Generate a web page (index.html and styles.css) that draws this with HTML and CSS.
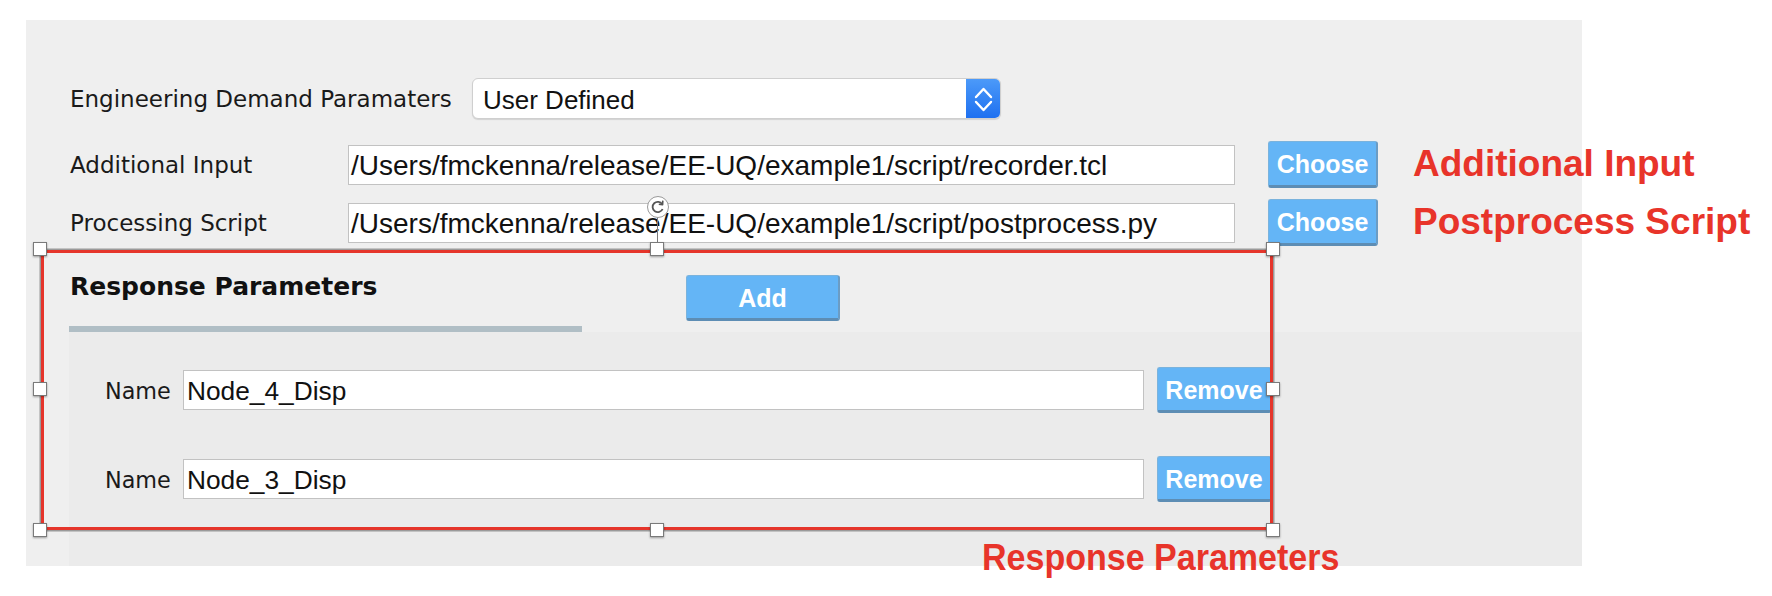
FILE: index.html
```html
<!DOCTYPE html>
<html>
<head>
<meta charset="utf-8">
<link rel="stylesheet" href="styles.css">
</head>
<body>
<div class="page">
  <div class="panel">
    <div class="form">
      <div class="row row-edp">
        <span class="lbl lbl-edp">Engineering Demand Paramaters</span>
        <div class="combo">
          <span class="combo-text">User Defined</span>
          <span class="combo-arrow">
            <svg width="34" height="41" viewBox="0 0 34 41"><polyline points="10,19 17.5,11 25,19" fill="none" stroke="#fff" stroke-width="2.4" stroke-linecap="round" stroke-linejoin="round"/><polyline points="10,24 17.5,32 25,24" fill="none" stroke="#fff" stroke-width="2.4" stroke-linecap="round" stroke-linejoin="round"/></svg>
          </span>
        </div>
      </div>
      <div class="row row-file row-first">
        <span class="lbl lbl-file">Additional Input</span>
        <div class="field field-path">/Users/fmckenna/release/EE-UQ/example1/script/recorder.tcl</div>
        <button class="btn btn-choose">Choose</button>
      </div>
      <div class="row row-file row-second">
        <span class="lbl lbl-file">Processing Script</span>
        <div class="field field-path">/Users/fmckenna/release/EE-UQ/example1/script/postprocess.py</div>
        <button class="btn btn-choose">Choose</button>
      </div>
    </div>
    <div class="section">
      <div class="section-head">
        <div class="tab"><span class="tab-title">Response Parameters</span></div>
        <button class="btn btn-add">Add</button>
      </div>
      <div class="section-body">
        <div class="param-row">
          <span class="param-lbl">Name</span>
          <div class="field field-param">Node_4_Disp</div>
          <button class="btn btn-remove">Remove</button>
        </div>
        <div class="param-row param-row-2">
          <span class="param-lbl">Name</span>
          <div class="field field-param">Node_3_Disp</div>
          <button class="btn btn-remove">Remove</button>
        </div>
      </div>
    </div>
  </div>

  <div class="sel-frame"></div>
  <div class="rot-line"></div>
  <div class="rot-handle">
    <svg width="22" height="22" viewBox="0 0 22 22"><path d="M15.2 8.2 A5.2 5.2 0 1 0 15.6 13" fill="none" stroke="#555" stroke-width="1.8"/><polyline points="15.8,4.6 15.6,8.6 11.8,8.2" fill="none" stroke="#555" stroke-width="1.6" stroke-linejoin="round"/></svg>
  </div>
  <div class="handle h-tl"></div>
  <div class="handle h-tm"></div>
  <div class="handle h-tr"></div>
  <div class="handle h-ml"></div>
  <div class="handle h-mr"></div>
  <div class="handle h-bl"></div>
  <div class="handle h-bm"></div>
  <div class="handle h-br"></div>

  <div class="note note-add">Additional Input</div>
  <div class="note note-post">Postprocess Script</div>
  <div class="note note-resp">Response Parameters</div>
</div>
</body>
</html>
```

FILE: styles.css
```css
html, body {
  margin: 0;
  padding: 0;
  background: #ffffff;
}

.page {
  position: relative;
  width: 1772px;
  height: 596px;
  overflow: hidden;
  font-family: "DejaVu Sans", "Liberation Sans", sans-serif;
  color: #161616;
}

.panel {
  position: absolute;
  left: 26px;
  top: 20px;
  width: 1556px;
  height: 546px;
  background: #efefef;
  display: flex;
  flex-direction: column;
}

.form {
  padding: 58px 0 0 44px;
  display: flex;
  flex-direction: column;
}

.row {
  display: flex;
  align-items: center;
}

.row-edp { height: 41px; }
.row-file { height: 47px; }
.row-first { margin-top: 22px; }
.row-second { margin-top: 11px; }

.lbl {
  font-size: 23px;
  white-space: nowrap;
  color: #1a1a1a;
}
.lbl-edp { width: 402px; flex: none; }
.lbl-file { width: 278px; flex: none; padding-top: 1px; }

.combo {
  width: 529px;
  height: 41px;
  box-sizing: border-box;
  background: #fff;
  border: 1px solid #cfcfcf;
  border-radius: 6px;
  box-shadow: 0 1px 1px rgba(0, 0, 0, 0.12);
  display: flex;
  align-items: center;
  overflow: hidden;
}
.combo-text {
  flex: 1;
  padding: 3px 0 0 10px;
  font-family: "Liberation Sans", Arial, sans-serif;
  font-size: 26px;
  color: #111;
}
.combo-arrow {
  width: 34px;
  height: 41px;
  flex: none;
  background: linear-gradient(#4d9bf9, #1d6ff0);
  display: flex;
}

.field {
  height: 40px;
  box-sizing: border-box;
  background: #fff;
  border: 1px solid #c2c2c2;
  display: flex;
  align-items: center;
  font-family: "Liberation Sans", Arial, sans-serif;
  color: #111;
  white-space: nowrap;
  overflow: hidden;
}
.field-path {
  width: 887px;
  flex: none;
  padding: 2px 0 0 2px;
  font-size: 28px;
}

.btn {
  box-sizing: border-box;
  margin: 0;
  padding: 2px 0 0 0;
  background: #64b5f6;
  color: #ffffff;
  font-family: "Liberation Sans", Arial, sans-serif;
  font-weight: bold;
  font-size: 25px;
  border: 1px solid #7ab3dd;
  border-bottom: 3px solid #5d8db4;
  border-right: 2px solid #6b9cc4;
  border-radius: 3px;
  display: flex;
  align-items: center;
  justify-content: center;
}
.btn-choose {
  width: 110px;
  height: 47px;
  margin-left: 33px;
  flex: none;
}

.section {
  margin-left: 43px;
  flex: 1;
  display: flex;
  flex-direction: column;
}

.section-head {
  display: flex;
  align-items: flex-start;
  height: 86px;
}
.tab {
  width: 513px;
  height: 86px;
  box-sizing: border-box;
  padding: 26px 0 0 1px;
  border-bottom: 6px solid #b0bec5;
  flex: none;
}
.tab-title {
  display: block;
  font-weight: bold;
  font-size: 25px;
  line-height: 30px;
  color: #111;
}
.btn-add {
  width: 154px;
  height: 46px;
  margin: 29px 0 0 104px;
  flex: none;
}

.section-body {
  flex: 1;
  background: #ebebeb;
  padding: 35px 0 0 36px;
  display: flex;
  flex-direction: column;
}

.param-row {
  display: flex;
  align-items: center;
  height: 46px;
}
.param-row-2 { margin-top: 43px; }

.param-lbl {
  width: 78px;
  flex: none;
  font-size: 22.3px;
  padding-top: 1px;
  color: #1a1a1a;
}
.field-param {
  width: 961px;
  flex: none;
  padding: 2px 0 0 3px;
  font-size: 26.3px;
}
.btn-remove {
  width: 115px;
  height: 46px;
  margin-left: 13px;
  flex: none;
}

/* selection overlay */
.sel-frame {
  position: absolute;
  left: 41px;
  top: 250px;
  width: 1232px;
  height: 280px;
  box-sizing: border-box;
  border: 3px solid #e5352b;
  box-shadow: 0 0 0 1.5px #9a9a9a;
}

.handle {
  position: absolute;
  width: 14px;
  height: 14px;
  box-sizing: border-box;
  background: #ffffff;
  border: 1px solid #7a7a7a;
  box-shadow: 0 1px 2px rgba(0, 0, 0, 0.35);
}
.h-tl { left: 33px; top: 242px; }
.h-tm { left: 650px; top: 242px; }
.h-tr { left: 1266px; top: 242px; }
.h-ml { left: 33px; top: 382px; }
.h-mr { left: 1266px; top: 382px; }
.h-bl { left: 33px; top: 523px; }
.h-bm { left: 650px; top: 523px; }
.h-br { left: 1266px; top: 523px; }

.rot-line {
  position: absolute;
  left: 657px;
  top: 217px;
  width: 1px;
  height: 26px;
  background: #7a7a7a;
}
.rot-handle {
  position: absolute;
  left: 647px;
  top: 196px;
  width: 22px;
  height: 22px;
  box-sizing: border-box;
  border-radius: 50%;
  background: #ffffff;
  border: 1px solid #9a9a9a;
  display: flex;
  align-items: center;
  justify-content: center;
}
.rot-handle svg { margin: -1px; }

.note {
  position: absolute;
  font-family: "Liberation Sans", Arial, sans-serif;
  font-weight: bold;
  font-size: 37px;
  line-height: 37px;
  color: #e8342a;
  white-space: nowrap;
}
.note-add { left: 1413px; top: 145px; }
.note-post { left: 1413px; top: 203px; }
.note-resp {
  left: 982px;
  top: 540px;
  font-size: 36px;
  line-height: 36px;
  transform: scaleX(0.945);
  transform-origin: left center;
}
```
